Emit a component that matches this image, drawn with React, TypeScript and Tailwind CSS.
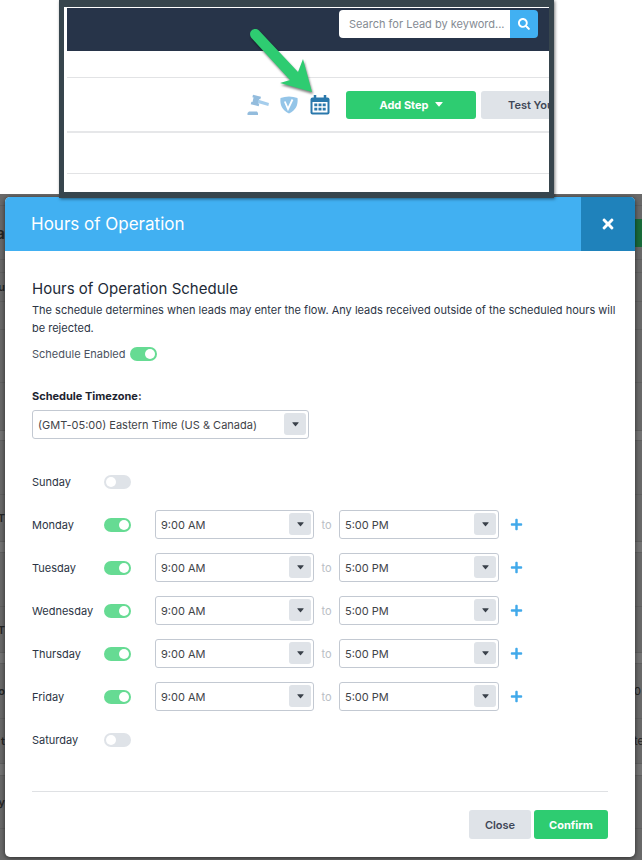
import React from "react";
import { FaSearch, FaTimes, FaPlus } from "react-icons/fa";

const days = [
  { name: "Sunday", on: false },
  { name: "Monday", on: true },
  { name: "Tuesday", on: true },
  { name: "Wednesday", on: true },
  { name: "Thursday", on: true },
  { name: "Friday", on: true },
  { name: "Saturday", on: false },
];

const pageRows = [
  { h: "h-3", left: "", right: "" },
  { h: "h-[54px]", left: "a", right: "", action: true },
  { h: "h-[13px]", left: "", right: "" },
  { h: "h-[29px]", left: "u", right: "" },
  { h: "h-7", left: "", right: "" },
  { h: "h-[53px]", left: "", right: "" },
  { h: "h-12", left: "", right: "" },
  { h: "h-[10px]", left: "", right: "", gap: true },
  { h: "h-[54px]", left: "", right: "" },
  { h: "h-[47px]", left: "T", right: "" },
  { h: "h-[11px]", left: "", right: "", gap: true },
  { h: "h-[54px]", left: "", right: "" },
  { h: "h-[46px]", left: "T", right: "" },
  { h: "h-[11px]", left: "", right: "", gap: true },
  { h: "h-[55px]", left: "o", right: "0" },
  { h: "h-[45px]", left: "t", right: "te" },
  { h: "h-[12px]", left: "", right: "", gap: true },
  { h: "h-[53px]", left: "y", right: "" },
];

function Caret({ className }: { className: string }) {
  return (
    <svg viewBox="0 0 8 5" className={className} aria-hidden="true">
      <path d="M0.6 0h6.8q.6 0 .2.5L4.5 4.2q-.5.5-1 0L.4.5Q0 0 .6 0z" fill="currentColor" />
    </svg>
  );
}

function Select({ id, label, value, width }: { id: string; label?: string; value: string; width: string }) {
  return (
    <div className={`relative ${width}`}>
      <select
        id={id}
        aria-label={label}
        defaultValue={value}
        className="block h-[29px] w-full appearance-none rounded-[3px] border border-[#c3c9d2] bg-white pr-7 pl-[5px] text-[11px] text-[#3f4449]"
      >
        <option>{value}</option>
      </select>
      <span className="pointer-events-none absolute top-[3px] right-[3px] flex size-[22px] items-center justify-center rounded-[3px] bg-[#dfe3e8] text-[#3a414a]">
        <Caret className="h-[5px] w-[7px]" />
      </span>
    </div>
  );
}

function Toggle({ id, on }: { id: string; on: boolean }) {
  return (
    <input
      id={id}
      type="checkbox"
      role="switch"
      defaultChecked={on}
      className="relative h-[14px] w-[27px] shrink-0 appearance-none rounded-full bg-[#dfe3e8] before:absolute before:top-[2px] before:left-[2px] before:size-[10px] before:rounded-full before:bg-white checked:bg-[#66db93] checked:before:left-[15px]"
    />
  );
}

function Callout() {
  return (
    <div className="relative z-10 mr-[88px] ml-[59px] border-x-[5px] border-t-[7px] border-b-[6px] border-[#37454d] bg-white pt-px pl-[3px] shadow-[1px_1px_3px_rgba(0,0,0,0.5)]">
      <div className="overflow-hidden">
        <header className="flex h-[43px] justify-end bg-[#273449] pt-[2px] pr-[11px]">
          <form className="flex h-7 overflow-hidden rounded-[4px]" onSubmit={(e) => e.preventDefault()}>
            <input
              type="text"
              aria-label="Search for Lead by keyword"
              placeholder="Search for Lead by keyword..."
              className="w-[171px] bg-white pl-[10px] text-[11px] text-[#3f4449] placeholder:text-[#858b93]"
            />
            <button type="submit" aria-label="Search" className="flex w-7 items-center justify-center bg-[#41b0f2] text-white">
              <FaSearch className="size-3" />
            </button>
          </form>
        </header>
        <div className="h-[27px] border-b border-[#e2e3e5]" />
        <div className="flex h-[55px] items-center justify-end border-b-2 border-[#e6e7e9]">
          <button type="button" aria-label="Auction" className="mr-[10px]">
            <svg viewBox="0 0 22 22" className="size-[22px]" aria-hidden="true">
              <path d="M6 .8l8 2-.7 2.400-1-.2-1 4.500 1 .3-.6 2.400-8-2 .7-2.400 1.100.2 1.100-4.500-1.200-.3z" fill="#93bcdd" />
              <path d="M11.500 5.800l10.500 3.200-.7 2.900-10.500-3z" fill="#a5cdec" />
              <path d="M2 17.500h8l1 1.400V21H.5v-2.100z" fill="#93bcdd" />
            </svg>
          </button>
          <button type="button" aria-label="Verification" className="mr-[11px]">
            <svg viewBox="0 0 20 20" className="size-5" aria-hidden="true">
              <path d="M10 1.500q4.500.2 8.500 1.500c.8 7-1.800 12.500-8.500 15.500C3.300 15.500.7 10 1.500 3q4-1.300 8.500-1.500z" fill="#94c5e8" />
              <path d="M5.800 6.500L9 14l4.500-9.500" fill="none" stroke="#fff" strokeWidth="1.800" />
            </svg>
          </button>
          <button type="button" aria-label="Hours of operation" className="mr-4">
            <svg viewBox="0 0 20 20" className="size-5" aria-hidden="true">
              <path d="M2.500 2.500h15q2 0 2 2V17.500q0 2-2 2h-15q-2 0-2-2V4.500q0-2 2-2z" fill="#2a78ac" />
              <path d="M5 0v4M15 0v4" stroke="#2a78ac" strokeWidth="2.500" />
              <path d="M2.500 7h15v10.500h-15z" fill="#fff" />
              <path d="M4.300 8.500h3v2.800h-3zM8.500 8.500h3v2.800h-3zM12.700 8.500h3v2.800h-3zM4.300 12.800h3v2.800h-3zM8.500 12.800h3v2.800h-3zM12.700 12.800h3v2.800h-3z" fill="#2a78ac" />
            </svg>
          </button>
          <button type="button" className="flex h-7 w-[130px] items-center justify-center gap-[6px] rounded-[3px] bg-[#2ecc71] text-[11px] font-bold text-white">
            Add Step
            <Caret className="h-[5px] w-2" />
          </button>
          <div className="ml-[5px] w-[68px] overflow-hidden">
            <button type="button" className="h-7 w-[120px] rounded-[3px] bg-[#dfe3e8] pl-[27px] text-left text-[11px] font-semibold whitespace-nowrap text-[#3f4757]">
              Test Your Flow
            </button>
          </div>
        </div>
        <div className="h-[41px] border-b border-[#e2e3e5]" />
        <div className="h-[18px]" />
      </div>
      <svg viewBox="0 0 80 80" className="absolute top-[16px] left-[176px] size-20 drop-shadow-[1px_2px_1px_rgba(0,0,0,0.5)]" aria-hidden="true">
        <path d="M19 7.500L58 49l5-13 9 33-32-9 10-3L11.500 15C7 9 14 3 19 7.500z" fill="#2ecc71" />
      </svg>
    </div>
  );
}

export default function App() {
  return (
    <main className="min-h-screen bg-white font-[Inter,sans-serif] text-[11px] leading-[18px] text-[#2b3444]">
      <Callout />
      <section className="relative -mt-1 overflow-hidden bg-[#696969] px-[5px] pt-[3px] pb-1">
        <div className="absolute inset-x-0 top-0" aria-hidden="true">
          {pageRows.map((row, i) => (
            <div
              key={i}
              className={`flex items-center justify-between border-b border-[#606060] text-[#252525] ${row.h} ${row.gap ? "bg-[#747474]" : ""}`}
            >
              <span className={`flex w-[5px] justify-end overflow-hidden font-semibold ${row.action ? "text-base" : ""}`}>{row.left}</span>
              {row.action ? (
                <span className="h-7 w-[10px] bg-[#196b3a]" />
              ) : (
                <span className="w-[8px] overflow-hidden">{row.right}</span>
              )}
            </div>
          ))}
        </div>
        <div role="dialog" aria-labelledby="dialog-title" className="relative mr-[2px] overflow-hidden rounded-[5px] bg-white shadow-[0_1px_5px_rgba(0,0,0,0.6)]">
          <header className="flex h-[54px] bg-[#41b0f2]">
            <h1 id="dialog-title" className="flex flex-1 items-center pl-[26px] text-[17px] text-white">
              Hours of Operation
            </h1>
            <button type="button" aria-label="Close dialog" className="flex w-[54px] items-center justify-center bg-[#1f82bb] text-white">
              <FaTimes className="size-4" />
            </button>
          </header>
          <div className="px-[27px] pt-7 pb-[18px]">
            <h2 className="text-[15px] leading-5 text-[#222a37]">Hours of Operation Schedule</h2>
            <p className="-mr-4 mt-[2px]">
              The schedule determines when leads may enter the flow. Any leads received outside of the scheduled hours will be rejected.
            </p>
            <div className="mt-2 flex items-center gap-1">
              <label htmlFor="enabled" className="text-[#4a5260]">Schedule Enabled</label>
              <Toggle id="enabled" on />
            </div>
            <label htmlFor="timezone" className="mt-6 mb-[5px] block font-bold text-[#1d2430]">
              Schedule Timezone:
            </label>
            <Select id="timezone" value="(GMT-05:00) Eastern Time (US & Canada)" width="w-[277px]" />
            <div className="mt-[21px]">
              {days.map((day) => (
                <div key={day.name} className="flex h-[43px] items-center">
                  <label htmlFor={day.name} className="w-[72px]">{day.name}</label>
                  <Toggle id={day.name} on={day.on} />
                  {day.on && (
                    <div className="ml-6 flex items-center">
                      <Select id={`${day.name}-from`} label={`${day.name} from`} value="9:00 AM" width="w-[159px]" />
                      <span className="w-[25px] text-center text-[#b9bec5]">to</span>
                      <Select id={`${day.name}-to`} label={`${day.name} to`} value="5:00 PM" width="w-[160px]" />
                      <button type="button" aria-label={`Add hours for ${day.name}`} className="ml-[11px] text-[#41a9ea]">
                        <FaPlus className="size-[13px]" />
                      </button>
                    </div>
                  )}
                </div>
              ))}
            </div>
            <footer className="mt-[30px] flex justify-end gap-[3px] border-t border-[#dfe1e4] pt-[18px]">
              <button type="button" className="h-[29px] w-[62px] rounded-[3px] bg-[#dfe3e8] font-semibold text-[#3f4757]">
                Close
              </button>
              <button type="button" className="h-[29px] w-[74px] rounded-[3px] bg-[#2ecc71] font-bold text-white">
                Confirm
              </button>
            </footer>
          </div>
        </div>
      </section>
    </main>
  );
}
